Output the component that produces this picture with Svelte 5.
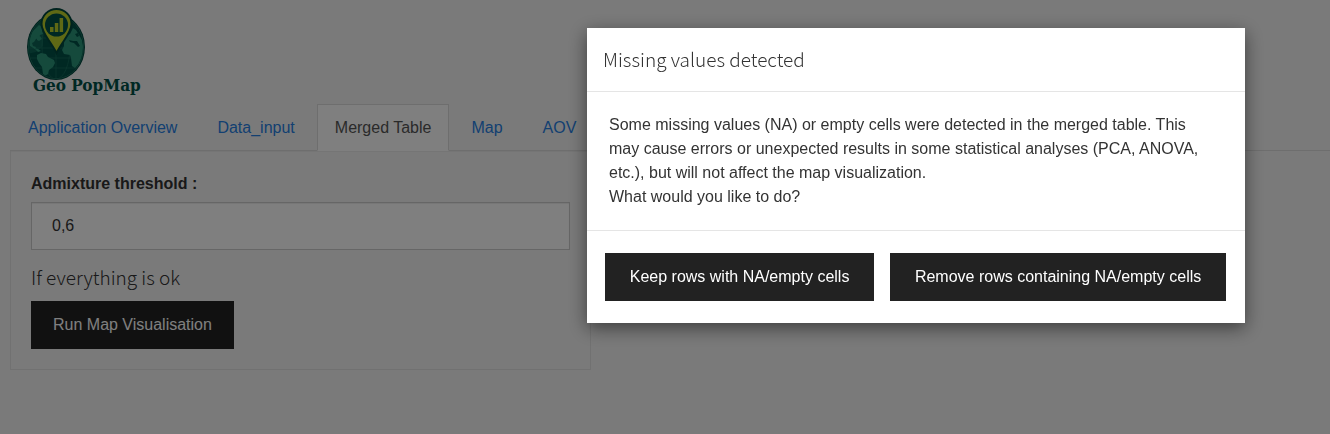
<script>
  const tabs = ['Application Overview', 'Data_input', 'Merged Table', 'Map', 'AOV'];
  let active = $state('Merged Table');
  let threshold = $state('0,6');
</script>

<main class="page">
  <header class="brand">
    <svg class="logo" viewBox="0 0 120 92" role="img" aria-label="Geo PopMap">
      <defs>
        <clipPath id="globe"><ellipse cx="34" cy="39" rx="27" ry="31" /></clipPath>
      </defs>
      <ellipse cx="34" cy="39" rx="29" ry="33" fill="#00463d" />
      <ellipse cx="34" cy="39" rx="27.6" ry="31.6" fill="none" stroke="#2b8f78" stroke-width="0.6" />
      <g clip-path="url(#globe)">
        <ellipse cx="34" cy="39" rx="27" ry="31" fill="#005047" />
        <path d="M5 8h16v30l-7 6-9 2z" fill="#0d6355" />
        <g fill="none" stroke="#1c7563" stroke-width="0.6">
          <path d="M5 30h58M5 40h58M6 50h56M10 60h48M34 8v63" />
          <ellipse cx="34" cy="39" rx="14" ry="32" />
        </g>
        <g fill="#2a9478">
          <path d="M17 17l3 2v4l1 3-3 1-1 3-3 1-2 3-2 1 1 3 3 1-1 2-5-3-1-6 3-8z" />
          <path d="M15 29l3-1 2 3-3 2-2-1zM12 40l4 1 3 2-3 1z" />
          <path d="M15 47l4-2 5 1 2 3 6 3 1 3-2 4-4 3-1 4-3 2-2-2-1-7-3-4-2-4z" />
          <path d="M42 33l1-4 5-3 3-6 3 2 6 10 2 10-2 8-3 6-4 4-3-2-1-8-1-3-6-1-2-4 2-4z" />
        </g>
        <path d="M47 32l4 1 4 0 3 5-2 1-4-4-4-1zM53 26l3-1 1 3-2 1z" fill="#005047" />
      </g>
      <path d="M34.500 1A15 15 0 0 0 19.500 16c0 9 9 17 15 29 6-12 15-20 15-29a15 15 0 0 0-15-15z" fill="#bfd32b" stroke="#00463d" stroke-width="2" />
      <circle cx="34.500" cy="17" r="11.500" fill="#005047" />
      <path d="M28 19h3.500v5h-3.500zM32.800 15h3.500v9h-3.500zM37.600 10h3.500v14h-3.500z" fill="#bfd32b" />
      <text x="11" y="83">Geo PopMap</text>
    </svg>
  </header>

  <nav class="tabs">
    {#each tabs as tab}
      <a href="#{tab}" class:active={tab === active} onclick={() => (active = tab)}>{tab}</a>
    {/each}
  </nav>

  <div class="columns">
    <section class="well">
      <label for="threshold">Admixture threshold :</label>
      <input id="threshold" type="text" bind:value={threshold} />
      <h4>If everything is ok</h4>
      <button type="button" class="btn">Run Map Visualisation</button>
    </section>
  </div>
</main>

<div class="backdrop">
  <div class="modal" role="dialog" aria-modal="true" aria-labelledby="modal-title">
    <div class="modal-header"><h4 id="modal-title">Missing values detected</h4></div>
    <div class="modal-body">
      <p>
        Some missing values (NA) or empty cells were detected in the merged table. This may cause errors or unexpected
        results in some statistical analyses (PCA, ANOVA, etc.), but will not affect the map visualization.<br />What
        would you like to do?
      </p>
    </div>
    <div class="modal-footer">
      <button type="button" class="btn">Keep rows with NA/empty cells</button>
      <button type="button" class="btn">Remove rows containing NA/empty cells</button>
    </div>
  </div>
</div>

<style>
  :global(body) {
    background: #f5f5f5;
    color: #333;
    font: 16px/24px 'Liberation Sans', Arial, sans-serif;
  }
  * { box-sizing: border-box; }
  .page { padding: 8px 0 0 10px; }
  .brand { padding-left: 12px; height: 96px; }
  .logo { display: block; width: 120px; height: 92px; }
  .logo text {
    font: bold 17px 'DejaVu Serif Condensed', 'DejaVu Serif', serif;
    fill: #005147;
  }
  .tabs {
    display: flex;
    gap: 4px;
    border-bottom: 1px solid #ddd;
  }
  .tabs a {
    padding: 11px 17px 10px;
    margin-bottom: -1px;
    border: 1px solid transparent;
    color: #2780e3;
    text-decoration: none;
  }
  .tabs a.active {
    background: #fff;
    border-color: #ddd #ddd #fff;
    color: #555;
  }
  .columns { display: grid; grid-template-columns: 4fr 5fr; margin-right: 12px; }
  .well {
    padding: 21px 20px 20px;
    border: 1px solid #e3e3e3;
    border-top: 0;
    box-shadow: inset 0 1px 1px rgba(0, 0, 0, 0.05);
  }
  label { display: block; margin-bottom: 6px; font-weight: bold; }
  input {
    display: block;
    width: 100%;
    height: 48px;
    padding: 0 20px;
    border: 1px solid #ccc;
    box-shadow: inset 0 1px 1px rgba(0, 0, 0, 0.075);
    background: #fff;
    color: #333;
    font: inherit;
  }
  h4 {
    margin: 0;
    font: 300 19px/24px 'Noto Sans CJK SC', 'Noto Sans', sans-serif;
  }
  .well h4 { margin: 15px 0 12px; }
  .btn {
    height: 48px;
    padding: 0 21px;
    border: 1px solid #222;
    background: #222;
    color: #fff;
    font: inherit;
    white-space: nowrap;
  }
  .backdrop {
    position: fixed;
    inset: 0;
    display: flex;
    justify-content: flex-end;
    align-items: flex-start;
    padding: 28px 85px 28px 10px;
    background: rgba(0, 0, 0, 0.5);
  }
  .modal {
    width: 100%;
    max-width: 658px;
    background: #fff;
    box-shadow: 0 5px 17px rgba(0, 0, 0, 0.5);
  }
  .modal-header { padding: 19px 16px 20px; border-bottom: 1px solid #e5e5e5; }
  .modal-body { padding: 21px 32px 21px 22px; }
  .modal-body p { margin: 0; }
  .modal-footer {
    display: flex;
    gap: 16px;
    padding: 22px 19px 22px 18px;
    border-top: 1px solid #e5e5e5;
  }
  .modal-footer .btn { flex: auto; }
</style>
